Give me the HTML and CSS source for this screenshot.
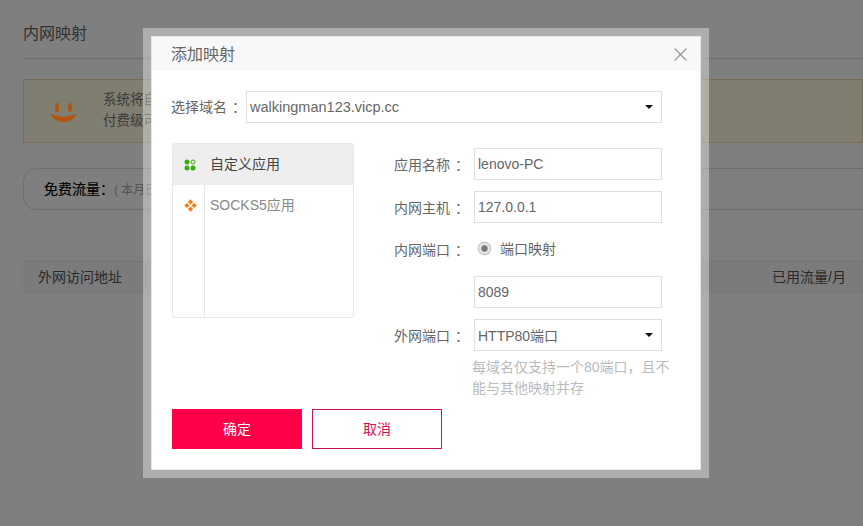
FILE: index.html
```html
<!DOCTYPE html>
<html lang="zh-CN">
<head>
<meta charset="utf-8">
<title>内网映射</title>
<link rel="stylesheet" href="styles.css">
</head>
<body>
<main class="page">
  <h1 class="page-title">内网映射</h1>
  <div class="notice">
    <svg class="smile" width="28" height="28" viewBox="0 0 28 28"><ellipse cx="7" cy="10.500" rx="2" ry="4.500" fill="#b3540f"/><ellipse cx="20" cy="10.500" rx="2" ry="4.500" fill="#b3540f"/><path d="M.5 16c3 12 23 12 26 0-6 5-20 5-26 0z" fill="#b3540f"/></svg>
    <p class="notice-text">系统将自<br>付费级可</p>
  </div>
  <div class="traffic"><b>免费流量：</b><span class="traffic-note">( 本月已</span></div>
  <div class="table-head"><span>外网访问地址</span><span>已用流量/月</span></div>
</main>

<div class="overlay">
  <section class="halo">
    <div class="modal">
      <header class="modal-head">
        <h2>添加映射</h2>
        <svg class="close" width="13" height="13" viewBox="0 0 13 13"><path d="M.7.7l11.600 11.600M12.300.7L.7 12.300" stroke="#8a8a8a" stroke-width="1.200" fill="none"/></svg>
      </header>
      <div class="domain-row">
        <label class="domain-label">选择域名<span class="punct">：</span></label>
        <div class="field select domain-select"><span>walkingman123.vicp.cc</span><i class="caret"></i></div>
      </div>
      <div class="columns">
        <nav class="apps">
          <div class="app active">
            <span class="app-icon"><svg width="12" height="12" viewBox="0 0 12 12"><circle cx="3" cy="3" r="2.500" fill="#3cab0c"/><circle cx="9" cy="3" r="2" fill="none" stroke="#3cab0c"/><circle cx="3" cy="9" r="2.500" fill="#3cab0c"/><circle cx="9" cy="9" r="2.500" fill="#3cab0c"/></svg></span>
            <span class="app-name">自定义应用</span>
          </div>
          <div class="app">
            <span class="app-icon"><svg width="13" height="13" viewBox="0 0 13 13" fill="#f57c0c"><path d="M6.500 .2l2.600 2.800-2.600 2.400-2.600-2.400zM6.500 12.800l2.600-2.800-2.600-2.400-2.600 2.400zM.2 6.500l2.800-2.600 2.400 2.600-2.400 2.600zM12.800 6.500l-2.800-2.600-2.400 2.600 2.400 2.600z"/></svg></span>
            <span class="app-name">SOCKS5应用</span>
          </div>
        </nav>
        <form class="form">
          <div class="row"><label>应用名称<span class="punct">：</span></label><div class="field input">lenovo-PC</div></div>
          <div class="row"><label>内网主机<span class="punct">：</span></label><div class="field input">127.0.0.1</div></div>
          <div class="row radio-row"><label>内网端口<span class="punct">：</span></label><span class="radio"></span><span class="radio-text">端口映射</span></div>
          <div class="row"><label></label><div class="field input">8089</div></div>
          <div class="row"><label>外网端口<span class="punct">：</span></label><div class="field select"><span>HTTP80端口</span><i class="caret"></i></div></div>
          <p class="hint">每域名仅支持一个80端口，且不能与其他映射并存</p>
        </form>
      </div>
      <div class="actions">
        <button class="btn primary" type="button">确定</button>
        <button class="btn ghost" type="button">取消</button>
      </div>
    </div>
  </section>
</div>
</body>
</html>
```
FILE: styles.css
```css
* { box-sizing: border-box; }
html, body { margin: 0; height: 100%; overflow: hidden; }
body {
  font-family: "Liberation Sans", "Noto Sans CJK SC", sans-serif;
  font-size: 14px;
  color: #555;
  background: #fff;
}
.punct { padding-left: 5px; margin-right: -5px; }
.page { padding-left: 23px; height: 526px; }
.page-title {
  margin: 0;
  height: 59px;
  padding-top: 24px;
  font-size: 16px;
  line-height: 20px;
  font-weight: 400;
  color: #666;
  border-bottom: 1px solid #ddd;
}
.notice {
  margin-top: 20px;
  height: 64px;
  display: flex;
  align-items: center;
  gap: 25px;
  padding-left: 26px;
  background: #fffde1;
  border: 1px solid #f5d9a8;
}
.smile { flex: none; position: relative; z-index: 2; }
.notice-text { margin: 0 0 2px; font-size: 13.500px; line-height: 21px; color: #777; }
.traffic {
  margin-top: 25px;
  height: 42px;
  display: flex;
  align-items: center;
  padding: 0 0 2px 20px;
  border: 1px solid #ddd;
  border-right: 0;
  border-radius: 14px 0 0 14px;
}
.traffic b { font-weight: 400; color: #000; -webkit-text-stroke: .2px #000; white-space: nowrap; }
.traffic-note { font-size: 12px; color: #aaa; }
.table-head {
  margin-top: 51px;
  height: 33px;
  display: flex;
  justify-content: space-between;
  align-items: center;
  padding: 0 17px 4px 15px;
  color: #555;
  background: #f6f6f6;
  border-top: 1px solid #ececec;
}
.overlay {
  position: fixed;
  inset: 0;
  z-index: 1;
  background: rgba(0, 0, 0, .5);
  padding: 28px 0 0 143px;
}
.halo {
  position: relative;
  z-index: 3;
  width: 566px;
  height: 450px;
  padding: 8px;
  background: rgba(255, 255, 255, .37);
}
.modal {
  height: 434px;
  background: #fff;
  border: 1px solid #e6e6e6;
}
.modal-head {
  height: 34px;
  display: flex;
  align-items: center;
  justify-content: space-between;
  padding: 0 13px 0 19px;
  background: #f8f8f8;
}
.modal-head h2 { margin: 0 0 3px; font-size: 16px; font-weight: 400; color: #666; }
.domain-row {
  margin-top: 20px;
  display: flex;
  align-items: center;
  padding-left: 19px;
}
.domain-label { flex: none; width: 75px; padding-bottom: 2px; color: #666; white-space: nowrap; }
.field {
  height: 32px;
  display: flex;
  align-items: center;
  padding-left: 3px;
  border: 1px solid #e0e0e0;
  color: #666;
  font-size: 14px;
}
.select { justify-content: space-between; padding-right: 8px; }
.domain-select { width: 416px; font-size: 14.500px; }
.caret {
  width: 0;
  height: 0;
  border: 4px solid transparent;
  border-top-color: #111;
  border-bottom: 0;
}
.columns { display: flex; margin-top: 20px; padding-left: 20px; }
.apps {
  flex: none;
  width: 182px;
  height: 175px;
  border: 1px solid #e8e8e8;
  border-radius: 3px;
  background: linear-gradient(#e8e8e8, #e8e8e8) 31px 0 / 1px 100% no-repeat;
}
.app { height: 41px; display: flex; align-items: center; color: #888; }
.app.active { background: #eee; color: #444; }
.app-icon { flex: none; width: 34px; display: flex; justify-content: center; }
.app-icon svg { display: block; }
.app-name { padding: 0 0 4px 3px; }
.form { flex: none; width: 320px; padding-left: 40px; margin-top: 5px; }
.row { display: flex; align-items: center; margin-bottom: 11px; }
.row label { flex: none; width: 80px; color: #666; white-space: nowrap; }
.row .field { width: 188px; }
.radio-row { height: 32px; padding-bottom: 4px; margin-bottom: 10px; }
.radio-row label { padding-top: 2px; }
.radio {
  flex: none;
  width: 13px;
  height: 13px;
  margin: 0 9px 0 4px;
  border-radius: 50%;
  border: 3px solid #e6e6e6;
  background: #777;
  box-shadow: 0 0 0 1px #bbb;
  transform: scale(.9);
}
.radio-text { color: #666; }
.hint {
  width: 206px;
  margin: -5px 0 0 78px;
  font-size: 14px;
  line-height: 21px;
  color: #bbb;
}
.actions { display: flex; gap: 10px; padding-left: 20px; margin-top: 10px; }
.btn {
  width: 130px;
  height: 40px;
  padding: 0 0 3px;
  font: inherit;
  font-size: 14px;
  border: 1px solid #c9145c;
  background: #fff;
  color: #d6104f;
}
.btn.primary { background: #ff0048; border-color: #ff0048; color: #fff; }
```
